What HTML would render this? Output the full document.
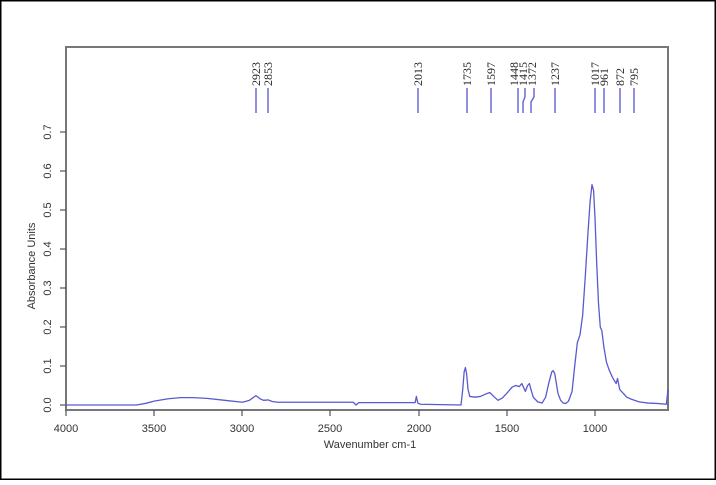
<!DOCTYPE html>
<html><head><style>
html,body{margin:0;padding:0;background:#fff;}
body{width:716px;height:480px;overflow:hidden;}
</style></head><body>
<svg width="716" height="480" viewBox="0 0 716 480" xmlns="http://www.w3.org/2000/svg">
<rect x="0.5" y="0.5" width="715" height="479" fill="#fff" stroke="#000" stroke-width="2"/>
<rect x="66" y="47" width="602" height="363" fill="none" stroke="#777" stroke-width="2"/>
<g stroke="#555" stroke-width="1.2">
<line x1="60" y1="405" x2="66" y2="405"/><line x1="60" y1="366" x2="66" y2="366"/>
<line x1="60" y1="327" x2="66" y2="327"/><line x1="60" y1="288" x2="66" y2="288"/>
<line x1="60" y1="249" x2="66" y2="249"/><line x1="60" y1="210" x2="66" y2="210"/>
<line x1="60" y1="171" x2="66" y2="171"/><line x1="60" y1="132" x2="66" y2="132"/>
<line x1="66" y1="410" x2="66" y2="416"/><line x1="154" y1="410" x2="154" y2="416"/>
<line x1="242" y1="410" x2="242" y2="416"/><line x1="330" y1="410" x2="330" y2="416"/>
<line x1="419" y1="410" x2="419" y2="416"/><line x1="507" y1="410" x2="507" y2="416"/>
<line x1="595" y1="410" x2="595" y2="416"/>
</g>
<g font-family="Liberation Sans, sans-serif" font-size="11" fill="#333" text-anchor="middle">
<text transform="translate(51,405) rotate(-90)">0.0</text>
<text transform="translate(51,366) rotate(-90)">0.1</text>
<text transform="translate(51,327) rotate(-90)">0.2</text>
<text transform="translate(51,288) rotate(-90)">0.3</text>
<text transform="translate(51,249) rotate(-90)">0.4</text>
<text transform="translate(51,210) rotate(-90)">0.5</text>
<text transform="translate(51,171) rotate(-90)">0.6</text>
<text transform="translate(51,132) rotate(-90)">0.7</text>
<text transform="translate(35,266) rotate(-90)">Absorbance Units</text>
<text x="66" y="432">4000</text><text x="154" y="432">3500</text><text x="242" y="432">3000</text>
<text x="330" y="432">2500</text><text x="419" y="432">2000</text><text x="507" y="432">1500</text>
<text x="595" y="432">1000</text>
<text x="370" y="448">Wavenumber cm-1</text>
</g>
<g stroke="#6b6bd6" stroke-width="1.5" fill="none">
<line x1="256" y1="88" x2="256" y2="113"/><line x1="268" y1="88" x2="268" y2="113"/>
<line x1="418" y1="88" x2="418" y2="113"/><line x1="467" y1="88" x2="467" y2="113"/>
<line x1="491" y1="88" x2="491" y2="113"/><line x1="518" y1="88" x2="518" y2="113"/>
<path d="M525 88 V97 L523 102 V113"/><path d="M534 88 V97 L531 102 V113"/>
<line x1="555" y1="88" x2="555" y2="113"/><line x1="595" y1="88" x2="595" y2="113"/>
<line x1="604" y1="88" x2="604" y2="113"/><line x1="620" y1="88" x2="620" y2="113"/>
<line x1="634" y1="88" x2="634" y2="113"/>
</g>
<g font-family="Liberation Serif, serif" font-size="12" fill="#222">
<text transform="translate(260,86) rotate(-90)">2923</text>
<text transform="translate(272,86) rotate(-90)">2853</text>
<text transform="translate(422,86) rotate(-90)">2013</text>
<text transform="translate(471,86) rotate(-90)">1735</text>
<text transform="translate(495,86) rotate(-90)">1597</text>
<text transform="translate(518,86) rotate(-90)">1448</text>
<text transform="translate(527,86) rotate(-90)">1415</text>
<text transform="translate(536,86) rotate(-90)">1372</text>
<text transform="translate(559,86) rotate(-90)">1237</text>
<text transform="translate(599,86) rotate(-90)">1017</text>
<text transform="translate(608,86) rotate(-90)">961</text>
<text transform="translate(624,86) rotate(-90)">872</text>
<text transform="translate(638,86) rotate(-90)">795</text>
</g>
<g transform="translate(66,405) scale(0.17633,-0.39)">
<path vector-effect="non-scaling-stroke" fill="none" stroke="#5a5ad0" stroke-width="1.3" stroke-linejoin="round" d="M0 0 L400 0 L450 4 L500 10 L580 16 L650 19 L720 19 L800 17 L900 12 L1000 7 L1040 12 L1077 24 L1100 16 L1120 12 L1147 13 L1170 9 L1200 7 L1500 7 L1630 7 L1645 0 L1660 6 L1980 6 L1987 22 L1995 5 L2010 2 L2240 0 L2250 40 L2258 85 L2265 96 L2272 80 L2280 40 L2290 22 L2320 20 L2350 22 L2380 28 L2403 32 L2430 20 L2450 12 L2475 18 L2500 30 L2530 46 L2552 50 L2570 47 L2585 55 L2595 45 L2605 35 L2618 50 L2628 55 L2640 35 L2650 20 L2675 8 L2700 5 L2720 20 L2740 60 L2755 85 L2763 88 L2772 80 L2790 30 L2805 12 L2820 5 L2835 4 L2850 10 L2870 35 L2885 100 L2900 160 L2915 180 L2930 230 L2945 330 L2960 440 L2972 520 L2983 565 L2992 550 L3000 480 L3010 360 L3020 260 L3030 200 L3039 190 L3050 150 L3065 110 L3080 90 L3100 70 L3120 55 L3128 68 L3140 40 L3160 30 L3180 20 L3205 15 L3250 8 L3300 5 L3350 4 L3405 2 L3414 40"/>
</g>
</svg>
</body></html>
